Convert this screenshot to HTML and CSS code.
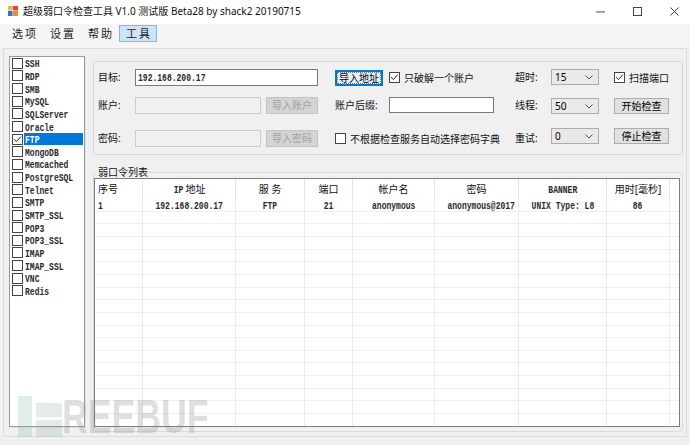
FILE: index.html
```html
<!DOCTYPE html>
<html lang="zh-CN">
<head>
<meta charset="utf-8">
<title>超级弱口令检查工具</title>
<link rel="stylesheet" href="styles.css">
</head>
<body>
<div class="window">
  <div class="titlebar">
    <svg class="app-icon" viewBox="0 0 10 10">
      <rect x="0" y="0" width="4.5" height="4.5" fill="#f3b638"/>
      <rect x="5" y="0" width="5" height="4.5" fill="#e2453c"/>
      <rect x="0" y="5" width="4.5" height="5" fill="#2f6fd0"/>
      <rect x="5" y="5" width="5" height="5" fill="#f08a2c"/>
    </svg>
    <span class="title">超级弱口令检查工具 V1.0 测试版 Beta28 by shack2 20190715</span>
    <div class="controls">
      <span class="ctl"><svg viewBox="0 0 10 10" class="ctl-ico"><line x1="0" y1="5.5" x2="10" y2="5.5"/></svg></span>
      <span class="ctl"><svg viewBox="0 0 10 10" class="ctl-ico"><rect x="0.5" y="0.5" width="9" height="9"/></svg></span>
      <span class="ctl"><svg viewBox="0 0 10 10" class="ctl-ico"><line x1="0.5" y1="0.5" x2="9.5" y2="9.5"/><line x1="9.5" y1="0.5" x2="0.5" y2="9.5"/></svg></span>
    </div>
  </div>

  <div class="menubar">
    <span class="menu-item">选项</span>
    <span class="menu-item">设置</span>
    <span class="menu-item">帮助</span>
    <span class="menu-item active">工具</span>
  </div>

  <div class="client">
    <div class="service-list">
      <div class="svc"><span class="cb"></span><span class="svc-name"><span class="mono">SSH</span></span></div>
      <div class="svc"><span class="cb"></span><span class="svc-name"><span class="mono">RDP</span></span></div>
      <div class="svc"><span class="cb"></span><span class="svc-name"><span class="mono">SMB</span></span></div>
      <div class="svc"><span class="cb"></span><span class="svc-name"><span class="mono">MySQL</span></span></div>
      <div class="svc"><span class="cb"></span><span class="svc-name"><span class="mono">SQLServer</span></span></div>
      <div class="svc"><span class="cb"></span><span class="svc-name"><span class="mono">Oracle</span></span></div>
      <div class="svc"><span class="cb"><svg viewBox="0 0 9 9" class="tick"><polyline points="1.2,4.2 3.4,6.6 7.8,1.6"/></svg></span><span class="svc-name selected"><span class="mono">FTP</span></span></div>
      <div class="svc"><span class="cb"></span><span class="svc-name"><span class="mono">MongoDB</span></span></div>
      <div class="svc"><span class="cb"></span><span class="svc-name"><span class="mono">Memcached</span></span></div>
      <div class="svc"><span class="cb"></span><span class="svc-name"><span class="mono">PostgreSQL</span></span></div>
      <div class="svc"><span class="cb"></span><span class="svc-name"><span class="mono">Telnet</span></span></div>
      <div class="svc"><span class="cb"></span><span class="svc-name"><span class="mono">SMTP</span></span></div>
      <div class="svc"><span class="cb"></span><span class="svc-name"><span class="mono">SMTP_SSL</span></span></div>
      <div class="svc"><span class="cb"></span><span class="svc-name"><span class="mono">POP3</span></span></div>
      <div class="svc"><span class="cb"></span><span class="svc-name"><span class="mono">POP3_SSL</span></span></div>
      <div class="svc"><span class="cb"></span><span class="svc-name"><span class="mono">IMAP</span></span></div>
      <div class="svc"><span class="cb"></span><span class="svc-name"><span class="mono">IMAP_SSL</span></span></div>
      <div class="svc"><span class="cb"></span><span class="svc-name"><span class="mono">VNC</span></span></div>
      <div class="svc"><span class="cb"></span><span class="svc-name"><span class="mono">Redis</span></span></div>
    </div>

    <div class="main">
      <div class="config">
        <!-- row 1 -->
        <span class="lbl row1 col-lbl">目标:</span>
        <div class="field row1 col-target"><span class="mono">192.168.200.17</span></div>
        <div class="btn default row1 col-addr">导入地址</div>
        <label class="check row1 col-one"><span class="cb"><svg viewBox="0 0 9 9" class="tick"><polyline points="1.2,4.2 3.4,6.6 7.8,1.6"/></svg></span>只破解一个账户</label>
        <span class="lbl row1 col-lbl2">超时:</span>
        <div class="combo row1 col-combo"><span>15</span><svg class="chev" viewBox="0 0 8 5"><polyline points="0.5,0.5 4,4 7.5,0.5"/></svg></div>
        <label class="check row1 col-right"><span class="cb"><svg viewBox="0 0 9 9" class="tick"><polyline points="1.2,4.2 3.4,6.6 7.8,1.6"/></svg></span>扫描端口</label>

        <!-- row 2 -->
        <span class="lbl row2 col-lbl">账户:</span>
        <div class="field disabled row2 col-input"></div>
        <div class="btn disabled row2 col-imp">导入账户</div>
        <span class="lbl row2 col-addr">账户后缀:</span>
        <div class="field row2 col-suffix suffix"></div>
        <span class="lbl row2 col-lbl2">线程:</span>
        <div class="combo row2 col-combo shift"><span>50</span><svg class="chev" viewBox="0 0 8 5"><polyline points="0.5,0.5 4,4 7.5,0.5"/></svg></div>
        <div class="btn row2 col-right shift">开始检查</div>

        <!-- row 3 -->
        <span class="lbl row3 col-lbl bottom">密码:</span>
        <div class="field disabled row3 col-input bottom"></div>
        <div class="btn disabled row3 col-imp bottom">导入密码</div>
        <label class="check row3 col-long bottom"><span class="cb"></span>不根据检查服务自动选择密码字典</label>
        <span class="lbl row3 col-lbl2 bottom">重试:</span>
        <div class="combo row3 col-combo"><span>0</span><svg class="chev" viewBox="0 0 8 5"><polyline points="0.5,0.5 4,4 7.5,0.5"/></svg></div>
        <div class="btn row3 col-right">停止检查</div>
      </div>

      <fieldset class="results">
        <legend>弱口令列表</legend>
        <div class="table">
          <div class="thead">
            <div class="th w1 left">序号</div>
            <div class="th w2"><span class="mono">IP</span>地址</div>
            <div class="th w3">服 务</div>
            <div class="th w4">端口</div>
            <div class="th w5">帐户名</div>
            <div class="th w6">密码</div>
            <div class="th w7"><span class="mono">BANNER</span></div>
            <div class="th w8">用时[毫秒]</div>
            <div class="th w9"></div>
          </div>
          <div class="tbody">
            <div class="col w1 left"><div class="td"><span class="mono">1</span></div></div>
            <div class="col w2"><div class="td"><span class="mono">192.168.200.17</span></div></div>
            <div class="col w3"><div class="td"><span class="mono">FTP</span></div></div>
            <div class="col w4"><div class="td"><span class="mono">21</span></div></div>
            <div class="col w5"><div class="td"><span class="mono">anonymous</span></div></div>
            <div class="col w6"><div class="td"><span class="mono">anonymous@2017</span></div></div>
            <div class="col w7"><div class="td"><span class="mono">UNIX Type: L8</span></div></div>
            <div class="col w8"><div class="td"><span class="mono">86</span></div></div>
            <div class="col w9"></div>
          </div>
        </div>
      </fieldset>
    </div>
  </div>

  <div class="watermark" aria-hidden="true">
    <span class="wm-bar"></span>
    <span class="wm-blocks"><span class="wm-top"></span><span class="wm-bottom"></span></span>
    <span class="wm-text">REEBUF</span>
  </div>
</div>
</body>
</html>
```

FILE: styles.css
```css
* { box-sizing: border-box; }

html, body {
  margin: 0;
  padding: 0;
}

body {
  width: 690px;
  height: 445px;
  overflow: hidden;
  background: #f0f0f0;
  font-family: "Noto Sans", "Noto Sans CJK SC", sans-serif;
  font-size: 10px;
  color: #000;
}

.window {
  position: relative;
  height: 445px;
}

/* ---------- title bar ---------- */
.titlebar {
  height: 24px;
  background: #fff;
  display: flex;
  align-items: center;
  padding-bottom: 2px;
}

.app-icon {
  width: 10px;
  height: 10px;
  margin: 0 5px 0 8px;
  flex: none;
}

.title {
  flex: 1;
  white-space: nowrap;
  font-size: 10px;
  line-height: 14px;
  color: #111;
}

.controls {
  display: flex;
  align-self: stretch;
}

.ctl {
  width: 37px;
  padding-left: 5px;
  display: flex;
  align-items: center;
  justify-content: center;
}

.ctl-ico {
  width: 9px;
  height: 9px;
  fill: none;
  stroke: #333;
  stroke-width: 1;
}

/* ---------- menu ---------- */
.menubar {
  height: 24px;
  background: #f5f5f5;
  display: flex;
  padding: 1px 0 0 5px;
}

.menu-item {
  width: 38px;
  height: 17px;
  line-height: 16px;
  text-align: center;
  font-size: 11px;
  letter-spacing: 2px;
  padding-left: 2px;
  border: 1px solid transparent;
  color: #222;
}

.menu-item.active {
  background: #cce4f7;
  border-color: #82b8e6;
}

/* ---------- client ---------- */
.client {
  margin: 0 3px;
  height: 389px;
  border: 1px solid #dcdcdc;
  display: flex;
  gap: 8px;
  padding: 7px 3px 0 5px;
}

.mono {
  display: inline-block;
  font-family: "Liberation Mono", monospace;
  font-weight: bold;
  font-size: 11px;
  color: #2b2b2b;
  transform: scaleX(0.73);
  transform-origin: center;
  white-space: pre;
}

/* service list */
.service-list {
  width: 76px;
  height: 371px;
  flex: none;
  background: #fff;
  border: 1px solid #9a9a9a;
  box-shadow: 1px 1px 0 #e2e2e2;
}

.svc {
  height: 12.65px;
  display: flex;
  align-items: center;
}

.svc .cb {
  margin-left: 2px;
}

.cb {
  width: 11px;
  height: 11px;
  flex: none;
  background: #fff;
  border: 1px solid #444;
  display: flex;
  align-items: center;
  justify-content: center;
}

.tick {
  width: 9px;
  height: 9px;
  fill: none;
  stroke: #222;
  stroke-width: 1;
}

.svc-name {
  flex: 1;
  margin: 0 1px 0 1px;
  padding-left: 1px;
  height: 12px;
  line-height: 12px;
}

.svc-name .mono {
  transform-origin: left center;
}

.svc-name.selected {
  background: #0078d7;
}

.svc-name.selected .mono {
  color: #fff;
}

/* ---------- right column ---------- */
.main {
  width: 590px;
  flex: none;
  display: flex;
  flex-direction: column;
}

.config {
  margin-top: 5px;
  height: 94px;
  border: 1px solid #d7d7d7;
  border-radius: 3px;
  padding: 7px 0 0 4px;
  display: grid;
  grid-template-columns: 37px 126px 5px 52px 17px 54px 105px 21px 36px 48px 15px 55px;
  grid-template-rows: 28px 31px 19px;
  align-items: start;
}

.row1 { grid-row: 1; }
.row2 { grid-row: 2; }
.row3 { grid-row: 3; }
.bottom { align-self: end; }
.shift { margin-top: 1px; }

.col-lbl { grid-column: 1; }
.col-target { grid-column: 2 / 5; }
.col-input { grid-column: 2; }
.col-imp { grid-column: 4; }
.col-addr { grid-column: 6; }
.col-one { grid-column: 7 / 9; }
.col-suffix { grid-column: 7; }
.col-long { grid-column: 6 / 9; }
.col-lbl2 { grid-column: 9; }
.col-combo { grid-column: 10; }
.col-right { grid-column: 12; }

.lbl {
  line-height: 17px;
  white-space: nowrap;
  color: #111;
}

.field {
  height: 17px;
  background: #fff;
  border: 1px solid #7a7a7a;
  padding-left: 2px;
  line-height: 15px;
}

.field .mono {
  transform-origin: left center;
}

.field.suffix {
  height: 16px;
}

.field.disabled {
  background: #f0f0f0;
  border-color: #cccccc;
}

.btn {
  height: 16px;
  background: #e1e1e1;
  border: 1px solid #adadad;
  text-align: center;
  line-height: 14px;
  white-space: nowrap;
}

.btn.default {
  width: 48px;
  height: 16px;
  margin-top: 1px;
  background: #e5f1fb;
  border: 1px solid #0078d7;
  box-shadow: inset 0 0 0 1px #0078d7;
  outline: 1px dotted #777;
  outline-offset: -3px;
}

.btn.disabled {
  height: 17px;
  line-height: 15px;
  background: #d4d4d4;
  border-color: #c4c4c4;
  color: #a2a2a2;
}

.check {
  display: flex;
  align-items: center;
  gap: 4px;
  height: 17px;
  white-space: nowrap;
  color: #111;
}

.combo {
  height: 16px;
  display: flex;
  align-items: center;
  justify-content: space-between;
  padding: 0 5px 0 3px;
  background: #e9e9e9;
  border: 1px solid #acacac;
}

.chev {
  width: 8px;
  height: 5px;
  fill: none;
  stroke: #555;
  stroke-width: 1;
}

/* ---------- results ---------- */
.results {
  margin: 11px 0 0 0;
  padding: 0 2px 4px 0;
  border: 1px solid #dadada;
  border-radius: 3px;
  min-width: 0;
}

.results legend {
  margin-left: 3px;
  padding: 0 1px;
  line-height: 12px;
  font-size: 10px;
  color: #111;
}

.table {
  height: 249px;
  border: 1px solid #7c7c7c;
  background: #fff;
  display: flex;
  flex-direction: column;
}

.thead {
  display: flex;
  height: 20px;
  flex: none;
}

.th {
  height: 20px;
  line-height: 20px;
  text-align: center;
  white-space: nowrap;
  border-right: 1px solid #e5e5e5;
  background: #fff;
  color: #111;
}

.tbody {
  flex: 1;
  display: flex;
  background: repeating-linear-gradient(to bottom, #fff 0, #fff 11.65px, #efefef 11.65px, #efefef 12.65px);
}

.col {
  border-right: 1px solid #ebebeb;
  text-align: center;
}

.td {
  height: 12.65px;
  line-height: 12.65px;
  white-space: nowrap;
}

.left {
  text-align: left;
  padding-left: 3px;
}

.left .mono {
  transform-origin: left center;
}

.w1 { width: 48px; flex: none; }
.w2 { width: 93px; flex: none; }
.w3 { width: 69px; flex: none; }
.w4 { width: 48px; flex: none; }
.w5 { width: 82px; flex: none; }
.w6 { width: 84px; flex: none; }
.w7 { width: 88px; flex: none; }
.w8 { width: 63px; flex: none; }
.w9 { flex: 1; border-right: none; }

/* ---------- watermark (overlay) ---------- */
.watermark {
  position: absolute;
  left: 18px;
  top: 396px;
  height: 41px;
  display: flex;
  align-items: flex-start;
  pointer-events: none;
}

.wm-bar {
  width: 14px;
  height: 41px;
  background: rgba(110, 180, 150, 0.22);
}

.wm-blocks {
  width: 26px;
  margin: 7px 0 0 4px;
  display: flex;
  flex-direction: column;
  gap: 3px;
}

.wm-top {
  height: 14px;
  background: rgba(120, 160, 145, 0.2);
}

.wm-bottom {
  height: 17px;
  background: rgba(120, 160, 145, 0.2);
}

.wm-text {
  font-family: "Liberation Sans", sans-serif;
  font-weight: bold;
  font-size: 47.5px;
  line-height: 47.5px;
  margin-top: -3px;
  color: rgba(130, 130, 130, 0.26);
  transform: scaleX(0.75);
  transform-origin: left top;
  white-space: nowrap;
}
```
